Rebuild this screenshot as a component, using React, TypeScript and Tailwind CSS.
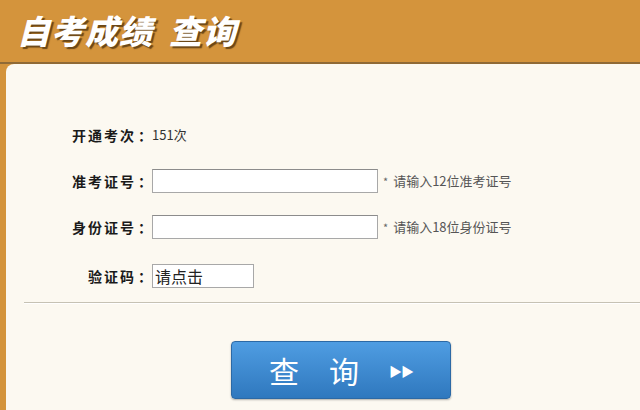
import React from 'react';

const font = { fontFamily: '"Noto Sans CJK SC", "Noto Sans", sans-serif' };

function Label({ text }: { text: string }) {
  return (
    <div className="w-[92px] flex justify-end items-center text-[14px] font-bold text-[#1a1a1a] tracking-[2px]">
      <span>{text}</span>
      <span className="ml-[2px] tracking-normal">：</span>
    </div>
  );
}

function FieldRow({ label, hint }: { label: string; hint: string }) {
  return (
    <div className="flex items-center h-[24px]">
      <Label text={label} />
      <div className="ml-[0px] w-[226px] h-[24px] bg-white border border-[#a8a8a8] border-t-[#8c8c8c]" />
      <span className="ml-[5px] text-[11px] text-[#666]">*</span>
      <span className="ml-[5px] text-[13px] text-[#555]">{hint}</span>
    </div>
  );
}

export default function App() {
  return (
    <div className="w-[640px] h-[410px] bg-[#d4943c] flex flex-col overflow-hidden" style={font}>
      {/* Header */}
      <header className="h-[64px] shrink-0 flex items-center pl-[17px] pb-[2px] border-b-2 border-[#8f6a36]">
        <h1 className="text-[33px] leading-none font-black italic text-white tracking-[1px] [text-shadow:2px_2px_1px_#6b4717]">
          自考成绩<span className="ml-[16px]">查询</span>
        </h1>
      </header>

      {/* Panel */}
      <main className="flex-1 ml-[6px] bg-[#fcf9f1] rounded-tl-[8px] pt-[59px]">
        <div className="flex flex-col gap-[22px] pl-[54px]">
          <div className="flex items-center h-[24px]">
            <Label text="开通考次" />
            <div className="text-[13px] text-[#333]">151次</div>
          </div>
          <FieldRow label="准考证号" hint="请输入12位准考证号" />
          <FieldRow label="身份证号" hint="请输入18位身份证号" />
        </div>

        <div className="flex items-center h-[24px] pl-[54px] mt-[25px]">
          <Label text="验证码" />
          <div className="w-[102px] h-[24px] bg-white border border-[#a8a8a8] flex items-center pl-[2px] text-[16px] text-[#222]">
            请点击
          </div>
        </div>

        <div className="ml-[18px] mt-[14px] border-t border-[#c6c2b4] border-b border-b-white" />

        <button className="ml-[225px] mt-[37px] w-[220px] h-[58px] rounded-[4px] bg-gradient-to-b from-[#4f9de2] to-[#2f78be] border border-[#2c69a5] flex items-center justify-center shadow-[0_1px_2px_rgba(0,0,0,0.3)]">
          <span className="text-[30px] text-white leading-none">查</span>
          <span className="ml-[30px] text-[30px] text-white leading-none">询</span>
          <span className="ml-[30px] text-[13px] text-white tracking-[-1px] leading-none">▶▶</span>
        </button>
      </main>
    </div>
  );
}
